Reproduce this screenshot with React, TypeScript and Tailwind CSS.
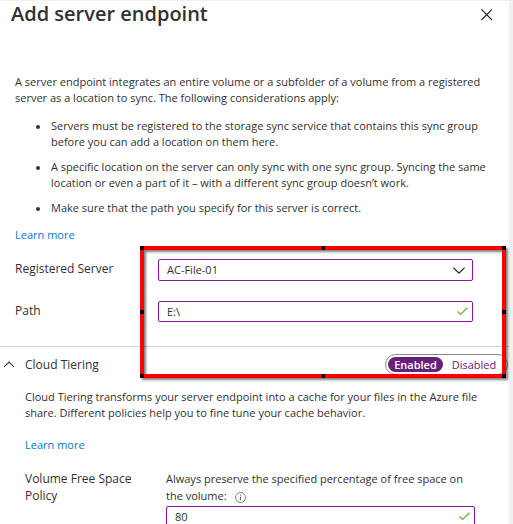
import { useState } from 'react'

const notes = [
  'Servers must be registered to the storage sync service that contains this sync group before you can add a location on them here.',
  'A specific location on the server can only sync with one sync group. Syncing the same location or even a part of it – with a different sync group doesn’t work.',
  'Make sure that the path you specify for this server is correct.',
]

function Check() {
  return (
    <svg className="pointer-events-none absolute right-1 top-1 h-3 w-3" viewBox="0 0 12 12" fill="none" stroke="#6bb131" strokeWidth="1.3">
      <path d="M0.4 6.4L3.6 9.4L10.4 2.8" />
    </svg>
  )
}

function Highlight() {
  return (
    <div className="pointer-events-none absolute top-[3px] bottom-0 left-[140px] right-[3px] border-4 border-[#ff0000] drop-shadow-[2px_2px_1px_rgba(0,0,0,0.5)]">
      <div className="absolute -inset-1 grid grid-cols-3 content-between">
        <i className="h-1 w-1 bg-black" />
        <i className="h-1 w-1 justify-self-center bg-black" />
        <i className="h-1 w-1 justify-self-end bg-black" />
        <i className="h-1 w-1 bg-black" />
        <i className="col-start-3 h-1 w-1 justify-self-end bg-black" />
        <i className="col-start-1 h-1 w-1 bg-black" />
        <i className="h-1 w-1 justify-self-center bg-black" />
        <i className="h-1 w-1 justify-self-end bg-black" />
      </div>
    </div>
  )
}

export default function App() {
  const [tiering, setTiering] = useState(true)

  return (
    <div className="h-screen overflow-hidden bg-[#f0f0f0] pt-px pr-1 font-['Open_Sans','Noto_Sans',sans-serif] text-[11px] leading-[16px] text-[#323130]">
      <main className="min-h-full bg-white">
        <header className="flex items-start justify-between pl-[11px] pr-4">
          <h1 className="text-[20px] leading-[26px] font-semibold">Add server endpoint</h1>
          <button type="button" aria-label="Close" className="mt-2">
            <svg className="h-3 w-3" viewBox="0 0 12 12" fill="none" stroke="#222" strokeWidth="1.1">
              <path d="M0.4 0.4L11 11M11 0.4L0.4 11" />
            </svg>
          </button>
        </header>

        <section className="pt-[47px] pl-[15px] pr-4">
          <p>
            A server endpoint integrates an entire volume or a subfolder of a volume from a registered server as a location to sync. The following considerations apply:
          </p>
          <ul className="mt-3 flex flex-col gap-[9px]">
            {notes.map((note) => (
              <li key={note} className="flex pl-[21px]">
                <span className="mt-[7px] mr-[11px] h-1 w-1 shrink-0 rounded-full bg-[#323130]" />
                <span>{note}</span>
              </li>
            ))}
          </ul>
          <a href="#" className="mt-[11px] block w-fit text-[#0078d4]">Learn more</a>
        </section>

        <section className="relative">
          <div className="flex items-start pt-4 pl-[15px] pr-9">
            <label htmlFor="server" className="w-[143px] shrink-0 text-[12px] leading-[20px]">Registered Server</label>
            <div className="relative grow">
              <select id="server" className="h-[22px] w-full appearance-none rounded-[2px] border border-[#881798] bg-white px-2 outline-none">
                <option>AC-File-01</option>
              </select>
              <svg className="pointer-events-none absolute right-2 top-[5px] h-3 w-3" viewBox="0 0 12 12" fill="none" stroke="#222" strokeWidth="1.2">
                <path d="M0.4 3.6L6 9.2L11.6 3.6" />
              </svg>
            </div>
          </div>
          <div className="flex items-start pt-5 pl-[15px] pr-9">
            <label htmlFor="path" className="w-[143px] shrink-0 text-[12px] leading-[20px]">Path</label>
            <div className="relative grow">
              <input id="path" defaultValue="E:\" className="block h-[21px] w-full rounded-[2px] border border-[#881798] px-2 outline-none" />
              <Check />
            </div>
          </div>
          <div className="mt-6 flex h-8 items-center border-t border-[#d0d0d0] pl-1 pr-px">
            <button type="button" className="mt-1 flex items-center gap-[11px] text-[12px] leading-[20px]">
              <svg className="h-[10px] w-[10px]" viewBox="0 0 10 10" fill="none" stroke="#333" strokeWidth="1.1">
                <path d="M0 6.9L5 2L10 6.9" />
              </svg>
              Cloud Tiering
            </button>
            <div className="mt-1 ml-auto flex h-[21px] w-[123px] shrink-0 items-center rounded-full border border-[#8a8886] px-[2px]">
              <button
                type="button"
                aria-pressed={tiering}
                onClick={() => setTiering(true)}
                className={tiering ? 'h-[15px] w-[55px] rounded-full bg-[#68217a] leading-[15px] font-semibold text-white' : 'h-[15px] w-[55px] rounded-full leading-[15px] text-[#68217a]'}
              >
                Enabled
              </button>
              <button
                type="button"
                aria-pressed={!tiering}
                onClick={() => setTiering(false)}
                className={tiering ? 'h-[15px] grow rounded-full leading-[15px] text-[#68217a]' : 'h-[15px] grow rounded-full bg-[#68217a] leading-[15px] font-semibold text-white'}
              >
                Disabled
              </button>
            </div>
          </div>
          <Highlight />
        </section>

        <section className="pt-[11px] pl-[25px] pr-7">
          <p>
            Cloud Tiering transforms your server endpoint into a cache for your files in the Azure file share. Different policies help you to fine tune your cache behavior.
          </p>
          <a href="#" className="mt-4 block w-fit text-[#0078d4]">Learn more</a>
          <div className="mt-[17px] flex items-start leading-[17px]">
            <label htmlFor="space" className="w-[141px] shrink-0 pr-4 text-[12px]">Volume Free Space Policy</label>
            <div className="grow pr-[6px]">
              <p>
                Always preserve the specified percentage of free space on the volume:
                <svg className="ml-2 inline h-[11px] w-[11px]" viewBox="0 0 11 11" fill="none" stroke="#605e5c">
                  <circle cx="5.5" cy="5.5" r="5" strokeWidth="0.8" />
                  <path d="M5.5 4.7V8.2M5.5 2.7V3.7" />
                </svg>
              </p>
              <div className="relative mt-[2px]">
                <input id="space" defaultValue="80" className="block h-[21px] w-full rounded-[2px] border border-[#881798] px-2 outline-none" />
                <Check />
              </div>
            </div>
          </div>
        </section>
      </main>
    </div>
  )
}
